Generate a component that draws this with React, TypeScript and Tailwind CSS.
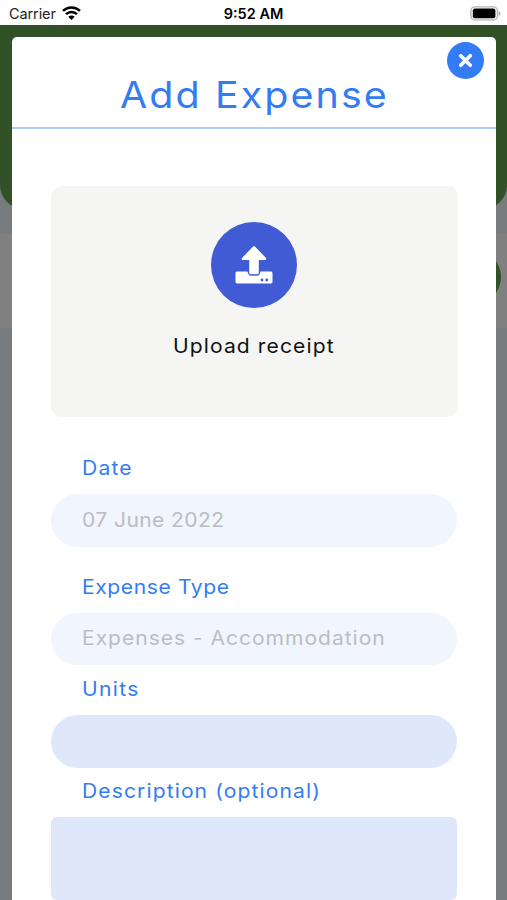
import type { ReactNode } from "react";

function StatusBar() {
  return (
    <div className="relative grid h-[25px] grid-cols-3 items-center bg-white pt-[3px] text-[14.5px] leading-none text-black">
      <div className="flex items-center gap-[6px] pl-[9px]">
        <span className="tracking-[-0.1px] text-[#222]">Carrier</span>
        <svg width="19" height="14" viewBox="0 0 19 14" fill="none" stroke="#000" strokeWidth="2.5" className="mb-[2px]">
          <path d="M1 4.9a12.2 12.2 0 0 1 17 0" />
          <path d="M4 8.2a7.8 7.8 0 0 1 11 0" />
          <path d="M9.5 14 6.3 10.7a4.6 4.6 0 0 1 6.4 0Z" fill="#000" stroke="none" />
        </svg>
      </div>
      <div className="text-center font-semibold">9:52 AM</div>
      <div className="flex justify-end pr-[6px]">
        <svg width="31" height="15" viewBox="0 0 31 15" className="mb-px">
          <rect x="0.9" y="0.9" width="26.5" height="13" rx="4" fill="#fff" stroke="#b5b5b5" strokeWidth="1.4" />
          <rect x="2.8" y="2.6" width="22.6" height="9.6" rx="2" fill="#000" />
          <path d="M28.7 5v5c1.1-.4 1.7-1.4 1.7-2.5S29.8 5.4 28.7 5Z" fill="#a8a8a8" />
        </svg>
      </div>
    </div>
  );
}

// dimmed screen that stays visible around the dialog
function Backdrop() {
  return (
    <div className="absolute inset-0 overflow-hidden bg-[#797c7e]">
      <div className="absolute inset-x-0 top-[209px] h-[94px] bg-[#808080]" />
      <div className="absolute inset-x-0 top-0 h-[184px] rounded-b-[24px] bg-[#315227]" />
      <div className="absolute top-[224px] left-[445px] size-14 rounded-full bg-[#315227]" />
    </div>
  );
}

function UploadIcon() {
  return (
    <svg width="38" height="38" viewBox="0 0 38 38" fill="#fff">
      <path d="M2.2 25.500h10.300c.3 2.700 1.600 4.200 3.800 4.200h5.400c2.200 0 3.500-1.500 3.800-4.200h10.300c1 0 1.700.7 1.700 1.700v8.600c0 1-.7 1.700-1.700 1.700H2.200c-1 0-1.700-.7-1.700-1.700v-8.600c0-1 .7-1.700 1.700-1.700Z" />
      <path d="M18.100.5c.5-.5 1.300-.5 1.800 0L31 12c.8.8.2 2.100-.9 2.100h-6.300v12.400c0 1-.7 1.700-1.700 1.700h-6.200c-1 0-1.700-.7-1.700-1.700V14.100H7.900c-1.100 0-1.700-1.300-.9-2.100Z" />
      <circle cx="27" cy="34" r="1.400" fill="#415bd5" />
      <circle cx="31.800" cy="34" r="1.400" fill="#415bd5" />
    </svg>
  );
}

interface FieldProps {
  label: string;
  labelClass: string;
  className?: string;
  children: ReactNode;
}

function Field({ label, labelClass, className = "", children }: FieldProps) {
  return (
    <div className={className}>
      <label className="block h-[38px] pl-[31px] text-[19.5px] leading-6 whitespace-nowrap text-[#347cf3]">
        <span className={`inline-block origin-left scale-x-108 ${labelClass}`}>{label}</span>
      </label>
      {children}
    </div>
  );
}

export default function App() {
  return (
    <div className="flex h-[900px] w-[507px] flex-col overflow-hidden bg-white font-['Inter',sans-serif]">
      <StatusBar />
      <div className="relative min-h-0 flex-1 pt-[12px] pr-[11px] pl-[12px]">
        <Backdrop />
        <div className="relative h-[863px] rounded-t-[5px] bg-white">
          <header className="flex h-[92px] items-start justify-center border-b-2 border-[#aecbfb] pt-[35px]">
            <h1 className="scale-x-108 text-[36.5px] leading-[46px] tracking-[1.93px] whitespace-nowrap text-[#347cf3]">
              Add Expense
            </h1>
          </header>
          <button
            aria-label="Close"
            className="absolute top-[5px] right-[12px] flex size-[37px] items-center justify-center rounded-full bg-[#347cf6]"
          >
            <svg width="15" height="15" viewBox="0 0 15 15" stroke="#fff" strokeWidth="3.6" strokeLinecap="round">
              <path d="m2.700 2.700 9.600 9.600M12.300 2.700l-9.600 9.600" />
            </svg>
          </button>

          <div className="px-[39px]">
            <button className="mt-[57px] flex h-[231px] w-[407px] flex-col items-center rounded-[11px] bg-[#f5f5f3] pt-[36px] pr-[2px]">
              <span className="flex size-[86px] items-center justify-center rounded-full bg-[#415bd5]">
                <UploadIcon />
              </span>
              <span className="mt-[26px] scale-x-108 text-[19.5px] leading-6 tracking-[1.02px] whitespace-nowrap text-[#111]">
                Upload receipt
              </span>
            </button>

            <Field label="Date" labelClass="tracking-[1.1px]" className="mt-[39px]">
              <div className="flex h-[53px] items-center rounded-full bg-[#f1f5fe] pl-[31px] text-[19.5px] text-[#bbbdc0]">
                <span className="origin-left scale-x-108 tracking-[0.38px]">07 June 2022</span>
              </div>
            </Field>
            <Field label="Expense Type" labelClass="tracking-[0.56px]" className="mt-[28px]">
              <div className="flex h-[52px] items-center rounded-full bg-[#f1f5fe] pl-[31px] text-[19.5px] whitespace-nowrap text-[#bbbdc0]">
                <span className="origin-left scale-x-108 tracking-[0.9px]">Expenses - Accommodation</span>
              </div>
            </Field>
            <Field label="Units" labelClass="tracking-[1.25px]" className="mt-[12px]">
              <input className="block h-[53px] w-full rounded-full bg-[#dfe8fa] px-[31px] outline-none" />
            </Field>
            <Field label="Description (optional)" labelClass="tracking-[1.03px]" className="mt-[11px]">
              <textarea className="block h-[83px] w-full resize-none rounded-[6px] bg-[#dfe7fa] px-[31px] outline-none" />
            </Field>
          </div>
        </div>
      </div>
    </div>
  );
}
